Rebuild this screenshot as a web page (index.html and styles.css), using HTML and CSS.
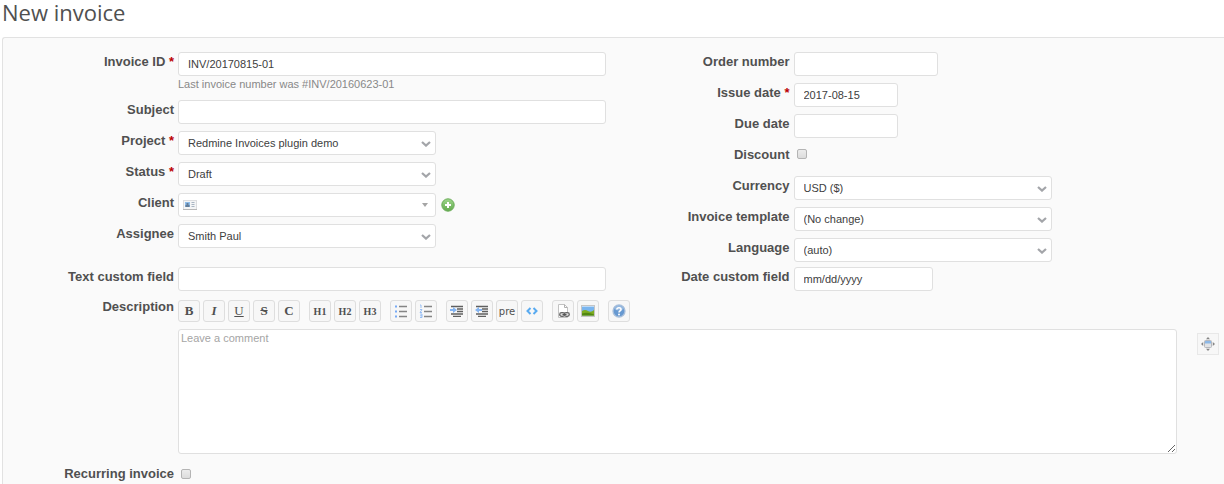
FILE: index.html
```html
<!DOCTYPE html>
<html lang="en">
<head>
<meta charset="utf-8">
<title>New invoice</title>
<link rel="stylesheet" href="styles.css">
</head>
<body>
<svg class="defs" aria-hidden="true">
  <symbol id="chevron" viewBox="0 0 10 6"><path d="M1 1l4 3.6L9 1" fill="none" stroke="#a3a5a9" stroke-width="2.2"/></symbol>
  <symbol id="lines" viewBox="0 0 14 14"><path d="M5 2.5h8M5 7.5h8M5 12.5h8" stroke="#858585" stroke-width="1.4"/></symbol>
  <symbol id="indent" viewBox="0 0 14 14"><path d="M1 2.5h12M7 5h6M7 7.5h6M1 10h12M3 12.300h8" stroke="#606060" stroke-width="1.300"/></symbol>
</svg>
<h1 class="title">New invoice</h1>
<form class="panel">
  <div class="columns">
    <div class="column">
      <div class="row">
        <label class="label" for="number">Invoice ID <span class="required">*</span></label>
        <div class="field stack">
          <input class="control" id="number" type="text" value="INV/20170815-01">
          <span class="hint">Last invoice number was #INV/20160623-01</span>
        </div>
      </div>
      <div class="row">
        <label class="label" for="subject">Subject</label>
        <div class="field"><input class="control" id="subject" type="text"></div>
      </div>
      <div class="row">
        <label class="label" for="project">Project <span class="required">*</span></label>
        <div class="field"><span class="select"><select class="control" id="project"><option>Redmine Invoices plugin demo</option></select><svg class="chevron"><use href="#chevron"/></svg></span></div>
      </div>
      <div class="row">
        <label class="label" for="status">Status <span class="required">*</span></label>
        <div class="field"><span class="select"><select class="control" id="status"><option>Draft</option></select><svg class="chevron"><use href="#chevron"/></svg></span></div>
      </div>
      <div class="row">
        <label class="label" for="client">Client</label>
        <div class="field">
          <span class="select"><select class="control" id="client"><option></option></select>
            <svg class="card" viewBox="0 0 14 10"><rect x=".5" y=".5" width="13" height="9" fill="#f4f5f6" stroke="#dcdddf"/><path d="M0 9.5h14" stroke="#b8b8b8"/><rect x="2" y="2" width="5" height="5" fill="#8fbdea"/><path d="M3.5 3h2v2h1v2h-4V5h1z" fill="#637d98"/><path d="M8.500 2.500h3M8.500 4.500h3M8.500 6.500h3" stroke="#a9b5c2"/></svg>
            <svg class="triangle" viewBox="0 0 6 4"><path d="M0 0h6L3 4z" fill="#a5a5a5"/></svg></span>
          <button class="add" type="button" aria-label="New client"><svg width="14" height="14" viewBox="0 0 14 14"><defs><linearGradient id="green" x2="0" y2="1"><stop stop-color="#9ed68c"/><stop offset="1" stop-color="#62aa4d"/></linearGradient></defs><circle cx="7" cy="7" r="6.200" fill="url(#green)" stroke="#6bad59"/><path d="M7 4v6M4 7h6" stroke="#fff" stroke-width="2"/></svg></button>
        </div>
      </div>
      <div class="row">
        <label class="label" for="assignee">Assignee</label>
        <div class="field"><span class="select"><select class="control" id="assignee"><option>Smith Paul</option></select><svg class="chevron"><use href="#chevron"/></svg></span></div>
      </div>
    </div>
    <div class="column second">
      <div class="row">
        <label class="label" for="order">Order number</label>
        <div class="field"><input class="control order" id="order" type="text"></div>
      </div>
      <div class="row">
        <label class="label" for="issue">Issue date <span class="required">*</span></label>
        <div class="field"><input class="control day" id="issue" type="text" value="2017-08-15"></div>
      </div>
      <div class="row">
        <label class="label" for="due">Due date</label>
        <div class="field"><input class="control day" id="due" type="text"></div>
      </div>
      <div class="row">
        <label class="label" for="discount">Discount</label>
        <div class="field"><input class="check" id="discount" type="checkbox"></div>
      </div>
      <div class="row">
        <label class="label" for="currency">Currency</label>
        <div class="field"><span class="select"><select class="control" id="currency"><option>USD ($)</option></select><svg class="chevron"><use href="#chevron"/></svg></span></div>
      </div>
      <div class="row">
        <label class="label" for="template">Invoice template</label>
        <div class="field"><span class="select"><select class="control" id="template"><option>(No change)</option></select><svg class="chevron"><use href="#chevron"/></svg></span></div>
      </div>
      <div class="row">
        <label class="label" for="language">Language</label>
        <div class="field"><span class="select"><select class="control" id="language"><option>(auto)</option></select><svg class="chevron"><use href="#chevron"/></svg></span></div>
      </div>
    </div>
  </div>
  <div class="columns custom">
    <div class="column">
      <div class="row">
        <label class="label" for="text-field">Text custom field</label>
        <div class="field"><input class="control" id="text-field" type="text"></div>
      </div>
    </div>
    <div class="column second">
      <div class="row">
        <label class="label" for="date-field">Date custom field</label>
        <div class="field"><input class="control date" id="date-field" type="date"></div>
      </div>
    </div>
  </div>
  <div class="row description">
    <label class="label" for="description">Description</label>
    <div class="field editor">
      <div class="toolbar">
        <div class="group">
          <button class="tool" type="button">B</button>
          <button class="tool italic" type="button">I</button>
          <button class="tool underline" type="button">U</button>
          <button class="tool strike" type="button">S</button>
          <button class="tool" type="button">C</button>
        </div>
        <div class="group">
          <button class="tool small" type="button">H1</button>
          <button class="tool small" type="button">H2</button>
          <button class="tool small" type="button">H3</button>
        </div>
        <div class="group">
          <button class="tool" type="button" aria-label="Unordered list"><svg class="glyph" viewBox="0 0 14 14"><use href="#lines"/><path d="M1 1.500h2v2H1zM1 6.500h2v2H1zM1 11.500h2v2H1z" fill="#77aaf5"/></svg></button>
          <button class="tool" type="button" aria-label="Ordered list"><svg class="glyph" viewBox="0 0 14 14"><use href="#lines"/><path d="M1 1h1v3M1 5.500h2l-2 3h2M1 10h2v3.500H1M1 11.800h2" fill="none" stroke="#8db8f3" stroke-width=".9"/></svg></button>
        </div>
        <div class="group">
          <button class="tool" type="button" aria-label="Quote"><svg class="glyph" viewBox="0 0 14 14"><use href="#indent"/><path d="M0 5h3V3l4 3-4 3V7H0z" fill="#83b4f2"/></svg></button>
          <button class="tool" type="button" aria-label="Unquote"><svg class="glyph" viewBox="0 0 14 14"><use href="#indent"/><path d="M7 5H4V3L0 6l4 3V7h3z" fill="#83b4f2"/></svg></button>
          <button class="tool pre" type="button">pre</button>
          <button class="tool" type="button" aria-label="Code"><svg class="glyph" viewBox="0 0 14 14"><path d="M5.500 4L2.500 7l3 3M8.500 4l3 3-3 3" fill="none" stroke="#58aaf0" stroke-width="2"/></svg></button>
        </div>
        <div class="group">
          <button class="tool" type="button" aria-label="Wiki link"><svg class="glyph" viewBox="0 0 14 14"><path d="M2.500.5h6l3 3v10h-9z" fill="#fff" stroke="#c2c2c2"/><path d="M8.500.5v3h3" fill="none" stroke="#b0b0b0"/><rect x="3.700" y="8.700" width="5" height="3.600" rx="1.800" fill="#ddd" stroke="#666" stroke-width="1.300"/><rect x="8.300" y="8.700" width="5" height="3.600" rx="1.800" fill="#ddd" stroke="#666" stroke-width="1.300"/><path d="M6.500 10.500h4" stroke="#555" stroke-width="1.200"/></svg></button>
          <button class="tool" type="button" aria-label="Image"><svg class="glyph" viewBox="0 0 14 14"><rect x=".5" y="1.500" width="13" height="11" fill="#fff" stroke="#c5c5c5"/><path d="M1 2.500h12v9H1z" fill="#79b5ef"/><path d="M1 7q3-2 6 0t6-1v5.500H1z" fill="#7dac20"/><path d="M1 9.500q6-2 12 1v1H1z" fill="#528711"/></svg></button>
        </div>
        <div class="group">
          <button class="tool" type="button" aria-label="Help"><svg class="glyph" viewBox="0 0 14 14"><circle cx="7" cy="7" r="6" fill="#6799d1" stroke="#a9bfda" stroke-width="1.300"/><path d="M2 5a5.300 5.300 0 0 1 10 0q-5 3-10 0" fill="#94b8e0"/><path d="M4.800 5.500C5 3 9.300 3.200 9 5.600 8.800 7 7 6.900 7 8.600" fill="none" stroke="#fff" stroke-width="1.600"/><circle cx="7" cy="10.600" r="1" fill="#fff"/></svg></button>
        </div>
      </div>
      <div class="comment">
        <textarea class="control area" id="description" placeholder="Leave a comment"></textarea>
        <button class="tool expand" type="button" aria-label="Full screen"><svg class="glyph" viewBox="0 0 14 14"><rect x="3.500" y="3.500" width="7" height="7" rx="1" fill="#e2e3e5" stroke="#b5b8bd"/><path d="M4 4h6v2.500H4z" fill="#8db8e6"/><path d="M7 0l2 2.200H5zM7 14l2-2.200H5zM0 7l2.200-2v4zM14 7l-2.200-2v4z" fill="#858585"/></svg></button>
      </div>
    </div>
  </div>
  <div class="row recurring">
    <label class="label" for="recurring">Recurring invoice</label>
    <div class="field"><input class="check" id="recurring" type="checkbox"></div>
  </div>
</form>
</body>
</html>
```
FILE: styles.css
```css
* {
  box-sizing: border-box;
}

body {
  display: flex;
  flex-direction: column;
  min-height: 100vh;
  margin: 0;
  padding-left: 2px;
  background: #fff;
  color: #505050;
  font-family: "Liberation Sans", Arial, sans-serif;
  font-size: 11px;
}

.defs {
  display: none;
}

.title {
  margin: 0 0 13px;
  color: #505050;
  font: 400 22px/24px "Open Sans", "Trebuchet MS", sans-serif;
}

.panel {
  --label: 171px;
  flex: 1;
  padding-top: 14px;
  border: 1px solid #e2e2e2;
  border-width: 1px 0 0 1px;
  border-top-left-radius: 3px;
  background: #fafafa;
}

.columns {
  display: grid;
  grid-template-columns: 1fr 1fr;
}

.column {
  display: flex;
  flex-direction: column;
  gap: 7px;
  padding-right: 8px;
}

.second {
  --label: 176px;
}

.row {
  display: grid;
  grid-template-columns: var(--label) 1fr;
  column-gap: 4px;
}

.label {
  font-size: 13px;
  font-weight: bold;
  line-height: 19px;
  text-align: right;
}

.required {
  color: #b00;
}

.field {
  display: flex;
  align-items: center;
  gap: 5px;
  min-width: 0;
  min-height: 24px;
}

.stack {
  flex-direction: column;
  align-items: stretch;
  gap: 0;
}

.hint {
  color: #888;
  line-height: 17px;
}

.control {
  width: 100%;
  height: 24px;
  margin: 0;
  padding: 0 9px;
  border: 1px solid #e0e0e0;
  border-radius: 3px;
  background: #fff;
  color: #404040;
  font: inherit;
  appearance: none;
}

.order {
  width: 144px;
}

.day {
  width: 104px;
}

.date {
  width: 139px;
}

.date::-webkit-calendar-picker-indicator {
  display: none;
}

.date::-webkit-datetime-edit-month-field,
.date::-webkit-datetime-edit-day-field,
.date::-webkit-datetime-edit-year-field {
  padding: 0;
}

.select {
  position: relative;
  width: 258px;
}

.chevron {
  position: absolute;
  top: 10px;
  right: 5px;
  width: 10px;
  height: 6px;
  pointer-events: none;
}

.triangle {
  position: absolute;
  top: 10px;
  right: 8px;
  width: 6px;
  height: 4px;
  pointer-events: none;
}

.card {
  position: absolute;
  top: 7px;
  left: 5px;
  width: 14px;
  height: 10px;
  pointer-events: none;
}

.add {
  display: flex;
  padding: 0;
  border: 0;
  background: none;
}

.check {
  width: 10px;
  height: 10px;
  margin: 0 3px;
  border: 1px solid #b4b4b4;
  border-radius: 2px;
  background: linear-gradient(#ececec, #dcdcdc);
  appearance: none;
}

.second .check {
  margin-bottom: 7px;
}

.custom {
  margin-top: 5px;
}

.description {
  margin-top: 6px;
}

.editor {
  flex-direction: column;
  align-items: stretch;
  gap: 7px;
  padding-top: 3px;
}

.toolbar {
  display: flex;
  flex-wrap: wrap;
  gap: 9px;
}

.group {
  display: flex;
  gap: 3px;
}

.tool {
  display: flex;
  align-items: center;
  justify-content: center;
  width: 22px;
  height: 22px;
  padding: 0;
  border: 1px solid #dedede;
  border-radius: 3px;
  background: #f7f7f7;
  color: #505050;
  font: bold 13px "Liberation Serif", serif;
}

.italic {
  font-style: italic;
}

.underline {
  font-weight: normal;
  text-decoration: underline;
}

.strike {
  text-decoration: line-through;
}

.small {
  font-size: 10px;
}

.pre {
  font: 10px "DejaVu Sans", sans-serif;
}

.glyph {
  width: 14px;
  height: 14px;
}

.comment {
  display: flex;
  align-items: flex-start;
  gap: 20px;
  padding-right: 5px;
}

.area {
  flex: 1;
  height: 125px;
  padding: 2px;
  resize: both;
}

.area::placeholder {
  color: #a5a5a5;
}

.expand {
  margin-top: 4px;
  border-color: #e8e8e8;
  border-radius: 0;
}

.recurring {
  margin-top: 10px;
}

.recurring .field {
  min-height: 20px;
}
```
